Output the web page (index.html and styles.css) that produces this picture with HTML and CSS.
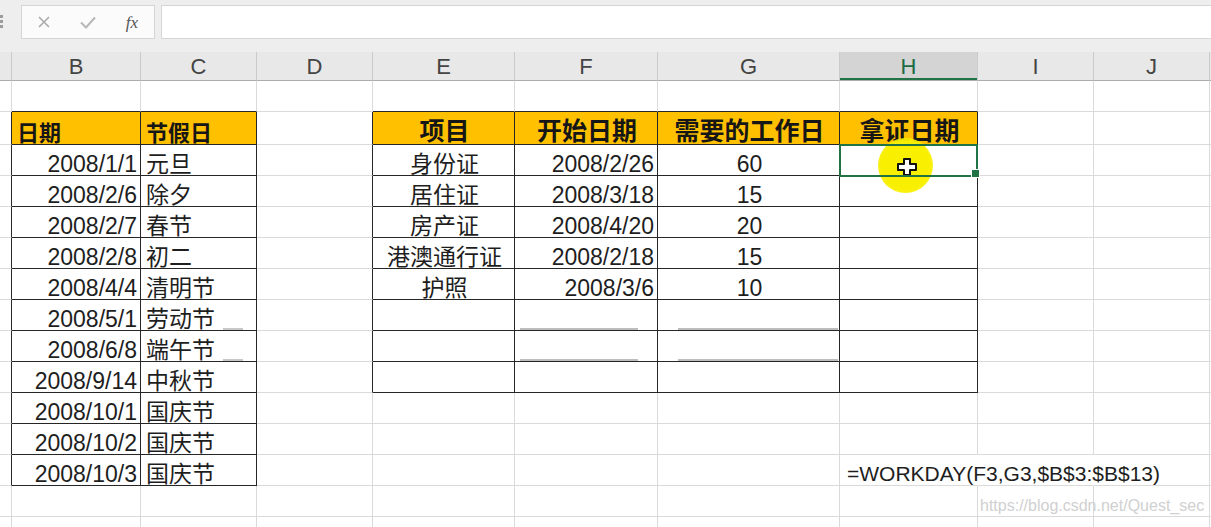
FILE: index.html
```html
<!DOCTYPE html>
<html lang="zh-CN">
<head>
<meta charset="utf-8">
<title>WORKDAY</title>
<link rel="stylesheet" href="styles.css">
</head>
<body>
<div class="toolbar">
  <svg class="grip" width="4" height="14" viewBox="0 0 4 14"><rect x="0" y="0" width="3" height="3" fill="#9c9c9c"/><rect x="0" y="5" width="3" height="3" fill="#9c9c9c"/><rect x="0" y="10" width="3" height="3" fill="#9c9c9c"/></svg>
  <div class="fbox">
    <svg width="12" height="12" viewBox="0 0 12 12"><path d="M1 1L11 11M11 1L1 11" stroke="#ababab" stroke-width="1.6" fill="none"/></svg>
    <svg width="16" height="13" viewBox="0 0 16 13"><path d="M1 6.5L6 11.5L15 1.5" stroke="#b8b8b8" stroke-width="2" fill="none"/></svg>
    <span class="fx">fx</span>
  </div>
  <div class="finput"></div>
</div>
<div class="sheet">
  <!-- column headers -->
  <div class="ch"></div><div class="ch">B</div><div class="ch">C</div><div class="ch">D</div><div class="ch">E</div><div class="ch">F</div><div class="ch">G</div><div class="ch on">H</div><div class="ch">I</div><div class="ch">J</div><div class="ch end"></div>
  <!-- row 1 -->
  <div class="c"></div><div class="c u"></div><div class="c u"></div><div class="c"></div><div class="c u"></div><div class="c u"></div><div class="c u"></div><div class="c u"></div><div class="c"></div><div class="c"></div><div class="c end"></div>
  <!-- row 2 -->
  <div class="c k"></div><div class="c t hb">日期</div><div class="c t hb">节假日</div><div class="c k"></div><div class="c t he">项目</div><div class="c t he">开始日期</div><div class="c t he">需要的工作日</div><div class="c t he">拿证日期</div><div class="c"></div><div class="c"></div><div class="c end"></div>
  <!-- row 3 -->
  <div class="c k"></div><div class="c t r">2008/1/1</div><div class="c t">元旦</div><div class="c k"></div><div class="c t m">身份证</div><div class="c t r">2008/2/26</div><div class="c t m">60</div>
  <div class="c t sel"><span class="hl"><svg width="20" height="18" viewBox="0 0 20 18"><path d="M7 1H13V6H19V12H13V17H7V12H1V6H7Z" fill="#fff" stroke="#111" stroke-width="2" stroke-linejoin="round"/></svg></span></div>
  <div class="c"></div><div class="c"></div><div class="c end"></div>
  <!-- row 4 -->
  <div class="c k"></div><div class="c t r">2008/2/6</div><div class="c t">除夕</div><div class="c k"></div><div class="c t m">居住证</div><div class="c t r">2008/3/18</div><div class="c t m">15</div><div class="c t"></div><div class="c"></div><div class="c"></div><div class="c end"></div>
  <!-- row 5 -->
  <div class="c k"></div><div class="c t r">2008/2/7</div><div class="c t">春节</div><div class="c k"></div><div class="c t m">房产证</div><div class="c t r">2008/4/20</div><div class="c t m">20</div><div class="c t"></div><div class="c"></div><div class="c"></div><div class="c end"></div>
  <!-- row 6 -->
  <div class="c k"></div><div class="c t r">2008/2/8</div><div class="c t">初二</div><div class="c k"></div><div class="c t m">港澳通行证</div><div class="c t r">2008/2/18</div><div class="c t m">15</div><div class="c t"></div><div class="c"></div><div class="c"></div><div class="c end"></div>
  <!-- row 7 -->
  <div class="c k"></div><div class="c t r">2008/4/4</div><div class="c t">清明节</div><div class="c k"></div><div class="c t m">护照</div><div class="c t r">2008/3/6</div><div class="c t m">10</div><div class="c t"></div><div class="c"></div><div class="c"></div><div class="c end"></div>
  <!-- row 8 -->
  <div class="c k"></div><div class="c t r">2008/5/1</div><div class="c t gc">劳动节</div><div class="c k"></div><div class="c t"></div><div class="c t gf"></div><div class="c t gg"></div><div class="c t"></div><div class="c"></div><div class="c"></div><div class="c end"></div>
  <!-- row 9 -->
  <div class="c k"></div><div class="c t r">2008/6/8</div><div class="c t gc">端午节</div><div class="c k"></div><div class="c t"></div><div class="c t gf"></div><div class="c t gg"></div><div class="c t"></div><div class="c"></div><div class="c"></div><div class="c end"></div>
  <!-- row 10 -->
  <div class="c k"></div><div class="c t r">2008/9/14</div><div class="c t">中秋节</div><div class="c k"></div><div class="c t"></div><div class="c t"></div><div class="c t"></div><div class="c t"></div><div class="c"></div><div class="c"></div><div class="c end"></div>
  <!-- row 11 -->
  <div class="c k"></div><div class="c t r">2008/10/1</div><div class="c t">国庆节</div><div class="c"></div><div class="c"></div><div class="c"></div><div class="c"></div><div class="c"></div><div class="c"></div><div class="c"></div><div class="c end"></div>
  <!-- row 12 -->
  <div class="c k"></div><div class="c t r">2008/10/2</div><div class="c t">国庆节</div><div class="c"></div><div class="c"></div><div class="c"></div><div class="c"></div><div class="c"></div><div class="c"></div><div class="c"></div><div class="c end"></div>
  <!-- row 13 -->
  <div class="c k"></div><div class="c t r">2008/10/3</div><div class="c t">国庆节</div><div class="c"></div><div class="c"></div><div class="c"></div><div class="c"></div><div class="c nr formula">=WORKDAY(F3,G3,$B$3:$B$13)</div><div class="c nr"></div><div class="c"></div><div class="c end"></div>
  <!-- row 14 -->
  <div class="c"></div><div class="c"></div><div class="c"></div><div class="c"></div><div class="c"></div><div class="c"></div><div class="c"></div><div class="c"></div><div class="c wm">https://blog.csdn.net/Quest_sec</div><div class="c"></div><div class="c end"></div>
  <!-- row 15 -->
  <div class="c"></div><div class="c"></div><div class="c"></div><div class="c"></div><div class="c"></div><div class="c"></div><div class="c"></div><div class="c"></div><div class="c"></div><div class="c"></div><div class="c end"></div>
</div>
</body>
</html>
```
FILE: styles.css
```css
* { box-sizing: border-box; }
html, body {
  margin: 0;
  height: 100%;
  overflow: hidden;
  background: #fff;
}
body {
  font-family: "Liberation Sans", "Noto Sans CJK SC", sans-serif;
  color: #1e1e1e;
}

/* formula bar */
.toolbar {
  height: 52px;
  padding-top: 5px;
  background: #eeeeee;
  display: flex;
  align-items: flex-start;
}
.grip { margin-top: 10px; flex: none; }
.fbox {
  margin-left: 17px;
  width: 134px;
  height: 34px;
  flex: none;
  border: 1px solid #d5d5d5;
  background: #fbfbfb;
  display: grid;
  grid-template-columns: repeat(3, 1fr);
  align-items: center;
  justify-items: center;
}
.fx {
  font-family: "Liberation Serif", serif;
  font-style: italic;
  font-size: 17px;
  color: #555;
  line-height: 1;
}
.finput {
  margin-left: 6px;
  flex: 1;
  height: 34px;
  border: 1px solid #d5d5d5;
  border-right: 0;
  background: #fff;
}

/* sheet */
.sheet {
  display: grid;
  grid-template-columns: 12px 129px 116px 116px 142px 143px 182px 138px 116px 116px 1fr;
  grid-template-rows: 29px 31px 33px repeat(13, 31px);
}
.ch {
  background: #e8e8e8;
  border-right: 1px solid #cbcbcb;
  border-bottom: 1px solid #acacac;
  display: flex;
  align-items: center;
  justify-content: center;
  font-size: 22px;
  color: #444;
  padding-top: 2px;
}
.ch.on {
  background: #d4d4d4;
  color: #1d6b45;
  box-shadow: inset 0 -2px 0 #217346;
}
.c {
  border-right: 1px solid #dadada;
  border-bottom: 1px solid #dadada;
  display: flex;
  align-items: flex-end;
  white-space: nowrap;
  font-size: 23px;
  line-height: 21px;
  padding: 0 3px 0 5px;
  min-width: 0;
}
.end { border-right: 0; padding: 0; }
.ch.end { border-right: 0; }
.k { border-right-color: #262626; }
.u { border-bottom-color: #262626; }
.t { border-right-color: #262626; border-bottom-color: #262626; }
.r { justify-content: flex-end; }
.m { justify-content: center; }
.nr { border-right-color: transparent; }
.hb {
  background: #ffc000;
  font-weight: bold;
  font-size: 22px;
  color: #161616;
}
.he {
  background: #ffc000;
  font-weight: bold;
  font-size: 25px;
  justify-content: center;
  padding-bottom: 2px;
  color: #161616;
}
.gf { background: linear-gradient(#bdbdbd, #bdbdbd) no-repeat 5px 100% / 118px 2px; }
.gg { background: linear-gradient(#bdbdbd, #bdbdbd) no-repeat 20px 100% / 160px 2px; }
.gc { background: linear-gradient(#c8c8c8, #c8c8c8) no-repeat 82px 100% / 20px 2px; }

.formula {
  font-size: 21px;
  padding-left: 7px;
  padding-bottom: 1px;
}
.wm {
  font-size: 16px;
  line-height: 16px;
  color: #d0d0d0;
  padding-left: 2px;
  padding-bottom: 2px;
}

/* selected cell */
.sel { position: relative; }
.sel::before {
  content: "";
  position: absolute;
  left: -1px;
  top: -1px;
  right: -1px;
  bottom: -2px;
  border: 2px solid #217346;
  z-index: 3;
}
.sel::after {
  content: "";
  position: absolute;
  right: -3px;
  bottom: -3px;
  width: 7px;
  height: 7px;
  background: #217346;
  border: 1px solid #fff;
  z-index: 4;
}
.hl {
  position: absolute;
  left: 38px;
  top: -7px;
  width: 55px;
  height: 55px;
  border-radius: 50%;
  background: radial-gradient(circle, #f9ef00 0%, #f9ef00 62%, rgba(249, 239, 0, 0.75) 82%, rgba(249, 239, 0, 0) 100%);
  z-index: 2;
  display: flex;
  align-items: center;
  justify-content: center;
  padding: 3px 0 0 3px;
}
```
